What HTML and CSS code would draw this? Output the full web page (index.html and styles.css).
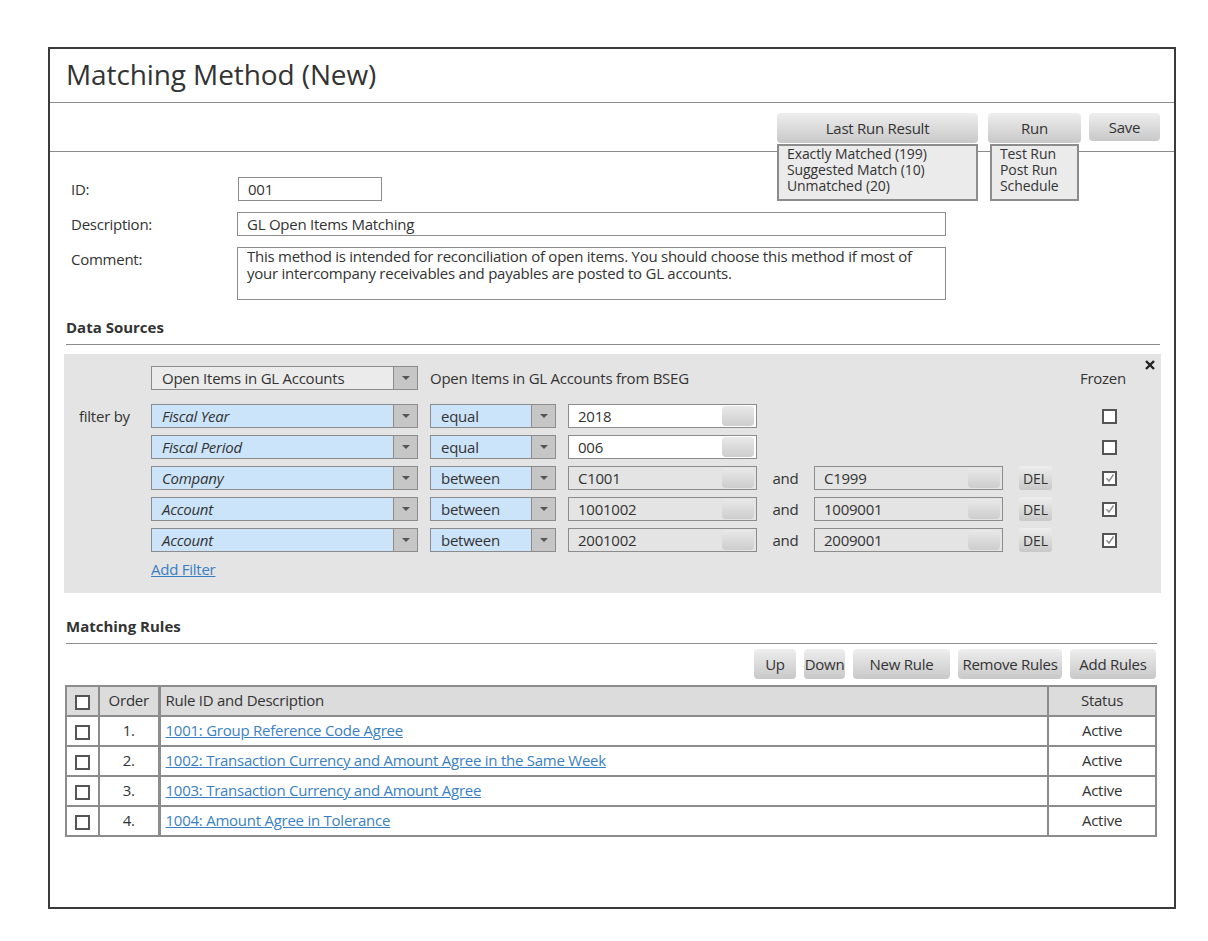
FILE: index.html
```html
<!DOCTYPE html>
<html>
<head>
<meta charset="utf-8">
<link rel="stylesheet" href="styles.css">
</head>
<body>
<div class="frame">
  <div class="title-bar"><h1 class="title">Matching Method (New)</h1></div>
  <div class="toolbar">
    <div class="menu-wrap">
      <div class="btn btn-lrr">Last Run Result</div>
      <div class="menu menu-lrr"><div class="mi">Exactly Matched (199)</div><div class="mi">Suggested Match (10)</div><div class="mi">Unmatched (20)</div></div>
    </div>
    <div class="menu-wrap run-wrap">
      <div class="btn btn-run">Run</div>
      <div class="menu menu-run"><div class="mi">Test Run</div><div class="mi">Post Run</div><div class="mi">Schedule</div></div>
    </div>
    <div class="btn btn-save">Save</div>
  </div>

  <div class="form">
    <div class="flabel">ID:</div>
    <div class="input id-input">001</div>
    <div class="flabel">Description:</div>
    <div class="input desc-input">GL Open Items Matching</div>
    <div class="flabel">Comment:</div>
    <div class="input textarea">This method is intended for reconciliation of open items. You should choose this method if most of your intercompany receivables and payables are posted to GL accounts.</div>
  </div>

  <div class="ds">
    <div class="section-title">Data Sources</div>
    <div class="panel">
      <span class="close"><svg width="10" height="10" viewBox="0 0 10 10"><path d="M1 1L9 9M9 1L1 9" stroke="#222" stroke-width="2.4" fill="none"/></svg></span>
      <div class="row row-src">
        <div class="lbl"></div>
        <div class="select src"><span class="val">Open Items in GL Accounts</span><span class="arrow"></span></div>
        <span class="src-desc">Open Items in GL Accounts from BSEG</span>
        <span class="frozen">Frozen</span>
      </div>
      <div class="row">
        <div class="lbl">filter by</div>
        <div class="select field"><span class="val">Fiscal Year</span><span class="arrow"></span></div>
        <div class="select op"><span class="val">equal</span><span class="arrow"></span></div>
        <div class="value"><span class="v">2018</span><span class="mini"></span></div>
        <span class="cb"></span>
      </div>
      <div class="row">
        <div class="lbl"></div>
        <div class="select field"><span class="val">Fiscal Period</span><span class="arrow"></span></div>
        <div class="select op"><span class="val">equal</span><span class="arrow"></span></div>
        <div class="value"><span class="v">006</span><span class="mini"></span></div>
        <span class="cb"></span>
      </div>
      <div class="row">
        <div class="lbl"></div>
        <div class="select field"><span class="val">Company</span><span class="arrow"></span></div>
        <div class="select op"><span class="val">between</span><span class="arrow"></span></div>
        <div class="value disabled"><span class="v">C1001</span><span class="mini"></span></div>
        <span class="and">and</span>
        <div class="value value2 disabled"><span class="v">C1999</span><span class="mini"></span></div>
        <div class="btn del">DEL</div>
        <span class="cb checked"><svg width="10" height="10" viewBox="0 0 10 10"><path d="M1.5 5.2L4 8L8.5 1.5" stroke="#8a8a8a" stroke-width="1.4" fill="none"/></svg></span>
      </div>
      <div class="row">
        <div class="lbl"></div>
        <div class="select field"><span class="val">Account</span><span class="arrow"></span></div>
        <div class="select op"><span class="val">between</span><span class="arrow"></span></div>
        <div class="value disabled"><span class="v">1001002</span><span class="mini"></span></div>
        <span class="and">and</span>
        <div class="value value2 disabled"><span class="v">1009001</span><span class="mini"></span></div>
        <div class="btn del">DEL</div>
        <span class="cb checked"><svg width="10" height="10" viewBox="0 0 10 10"><path d="M1.5 5.2L4 8L8.5 1.5" stroke="#8a8a8a" stroke-width="1.4" fill="none"/></svg></span>
      </div>
      <div class="row">
        <div class="lbl"></div>
        <div class="select field"><span class="val">Account</span><span class="arrow"></span></div>
        <div class="select op"><span class="val">between</span><span class="arrow"></span></div>
        <div class="value disabled"><span class="v">2001002</span><span class="mini"></span></div>
        <span class="and">and</span>
        <div class="value value2 disabled"><span class="v">2009001</span><span class="mini"></span></div>
        <div class="btn del">DEL</div>
        <span class="cb checked"><svg width="10" height="10" viewBox="0 0 10 10"><path d="M1.5 5.2L4 8L8.5 1.5" stroke="#8a8a8a" stroke-width="1.4" fill="none"/></svg></span>
      </div>
      <a class="add-filter">Add Filter</a>
    </div>
  </div>

  <div class="mr">
    <div class="section-title">Matching Rules</div>
    <div class="rule-btns">
      <div class="btn b-up">Up</div>
      <div class="btn b-down">Down</div>
      <div class="btn b-new">New Rule</div>
      <div class="btn b-remove">Remove Rules</div>
      <div class="btn b-add">Add Rules</div>
    </div>
    <table class="rules">
      <colgroup><col class="c1"><col class="c2"><col class="c3"><col class="c4"></colgroup>
      <tr class="head">
        <td class="cbcell"><span class="tcb"></span></td>
        <td class="order">Order</td>
        <td class="desc">Rule ID and Description</td>
        <td class="status">Status</td>
      </tr>
      <tr>
        <td class="cbcell"><span class="tcb"></span></td>
        <td class="order">1.</td>
        <td class="desc"><a class="link">1001: Group Reference Code Agree</a></td>
        <td class="status">Active</td>
      </tr>
      <tr>
        <td class="cbcell"><span class="tcb"></span></td>
        <td class="order">2.</td>
        <td class="desc"><a class="link">1002: Transaction Currency and Amount Agree in the Same Week</a></td>
        <td class="status">Active</td>
      </tr>
      <tr>
        <td class="cbcell"><span class="tcb"></span></td>
        <td class="order">3.</td>
        <td class="desc"><a class="link">1003: Transaction Currency and Amount Agree</a></td>
        <td class="status">Active</td>
      </tr>
      <tr>
        <td class="cbcell"><span class="tcb"></span></td>
        <td class="order">4.</td>
        <td class="desc"><a class="link">1004: Amount Agree in Tolerance</a></td>
        <td class="status">Active</td>
      </tr>
    </table>
  </div>
</div>
</body>
</html>
```

FILE: styles.css
```css
* { box-sizing: border-box; }
body {
  margin: 0;
  background: #fff;
  color: #333;
  font-family: "Open Sans", "Noto Sans", sans-serif;
  font-size: 15px;
  letter-spacing: -0.25px;
}
.frame {
  margin: 47px 0 0 48px;
  width: 1128px;
  height: 862px;
  border: 2px solid #3a3a3a;
}
.title-bar {
  height: 54px;
  border-bottom: 1px solid #8c8c8c;
  display: flex;
  align-items: center;
  padding: 0 0 3px 16px;
}
.title {
  margin: 0;
  font-weight: 400;
  font-size: 28px;
  letter-spacing: -0.1px;
  color: #333;
}
.toolbar {
  height: 49px;
  border-bottom: 1px solid #8c8c8c;
  display: flex;
  justify-content: flex-end;
  align-items: flex-start;
  padding: 10px 14px 0 0;
}
.btn {
  border-radius: 4px;
  background: linear-gradient(#eeeeee, #c8c8c8);
  display: flex;
  align-items: center;
  justify-content: center;
  color: #333;
}
.menu-wrap { position: relative; }
.run-wrap { margin-left: 10px; }
.btn-lrr { width: 201px; height: 30px; }
.btn-run { width: 93px; height: 30px; }
.btn-save { width: 71px; height: 28px; margin-left: 8px; }
.menu {
  position: absolute;
  top: 31px;
  left: 0;
  height: 57px;
  background: #ebebeb;
  border: 2px solid #8c8c8c;
  font-size: 14px;
  letter-spacing: -0.1px;
  padding: 0 0 0 8px;
  z-index: 2;
}
.mi { height: 16px; line-height: 16px; white-space: nowrap; }
.menu-lrr { width: 201px; }
.menu-run { left: 2px; width: 89px; }

.form {
  display: grid;
  grid-template-columns: 166px 709px;
  row-gap: 11px;
  padding: 25px 0 0 21px;
  align-items: start;
}
.flabel { line-height: 24px; }
.input {
  height: 24px;
  border: 1px solid #8c8c8c;
  padding: 0 9px;
  line-height: 22px;
  background: #fff;
}
.id-input { width: 144px; margin-left: 1px; }
.textarea { height: 53px; line-height: 17px; }

.ds { padding: 0 13px 0 14px; }
.section-title {
  margin: 17px 1px 0 2px;
  font-size: 15px;
  font-weight: 700;
  letter-spacing: 0;
  line-height: 20px;
  padding-bottom: 7px;
  border-bottom: 1px solid #8c8c8c;
}
.panel {
  margin-top: 9px;
  background: #e4e4e4;
  position: relative;
  padding: 12px 0 14px 15px;
}
.close {
  position: absolute;
  top: 6px;
  right: 6px;
  width: 10px;
  height: 10px;
  display: flex;
}
.row {
  display: flex;
  align-items: center;
  height: 24px;
  margin-bottom: 7px;
}
.row-src { margin-bottom: 14px; }
.lbl { width: 72px; }
.select {
  height: 24px;
  border: 1px solid #8c8c8c;
  background: #cce4fa;
  display: flex;
}
.select .val { flex: 1; padding-left: 10px; line-height: 22px; white-space: nowrap; }
.select .arrow {
  width: 24px;
  background: #c6c6c6;
  border-left: 1px solid #8c8c8c;
  display: flex;
  align-items: center;
  justify-content: center;
}
.arrow::after {
  content: "";
  border-left: 4px solid transparent;
  border-right: 4px solid transparent;
  border-top: 4px solid #555;
}
.field, .src { width: 267px; }
.field .val { font-style: italic; }
.src { background: #ebebeb; }
.op { width: 126px; margin-left: 12px; }
.src-desc { margin-left: 12px; }
.frozen { margin-left: auto; margin-right: 35px; }
.value {
  width: 189px;
  margin-left: 12px;
  height: 24px;
  border: 1px solid #8c8c8c;
  background: #fff;
  display: flex;
  align-items: center;
  padding: 0 2px 0 9px;
}
.value .v { flex: 1; }
.value.disabled { background: #e4e4e4; }
.value2 { margin-left: 0; }
.mini {
  width: 32px;
  height: 20px;
  border-radius: 4px;
  background: linear-gradient(#e9e9e9, #cdcdcd);
}
.and { width: 57px; text-align: center; }
.del { width: 33px; height: 24px; margin-left: 16px; border-radius: 3px; font-size: 14px; letter-spacing: 0; }
.cb {
  width: 15px;
  height: 15px;
  border: 2px solid #555;
  background: #fff;
  margin-left: auto;
  margin-right: 44px;
  display: flex;
  align-items: center;
  justify-content: center;
}
.add-filter {
  display: block;
  margin: 2px 0 0 72px;
  line-height: 20px;
  color: #3a7fc4;
  text-decoration: underline;
  width: max-content;
}

.mr { padding: 0 17px 0 15px; }
.mr .section-title { margin: 23px 0 0 1px; }
.rule-btns {
  display: flex;
  justify-content: flex-end;
  gap: 8px;
  margin: 5px 1px 0 0;
}
.rule-btns .btn { height: 30px; }
.b-up { width: 42px; }
.b-down { width: 41px; }
.b-new { width: 97px; }
.b-remove { width: 104px; }
.b-add { width: 86px; }
.rules {
  margin-top: 6px;
  width: 1092px;
  border-collapse: collapse;
  border: 2px solid #8c8c8c;
  table-layout: fixed;
}
.c1 { width: 33px; }
.c2 { width: 60px; }
.c4 { width: 108px; }
.rules td {
  border: 2px solid #8c8c8c;
  height: 30px;
  padding: 0 0 2px;
  vertical-align: middle;
}
.rules .head td { background: #dcdcdc; }
.rules td.order { text-align: center; border-right-width: 3px; }
.rules td.desc { padding-left: 5px; }
.rules td.status { text-align: center; }
.rules td.cbcell { text-align: center; padding: 0; }
.tcb {
  display: inline-block;
  width: 15px;
  height: 15px;
  border: 2px solid #555;
  background: #fff;
  vertical-align: middle;
}
.link { color: #3a7fc4; text-decoration: underline; }
```
